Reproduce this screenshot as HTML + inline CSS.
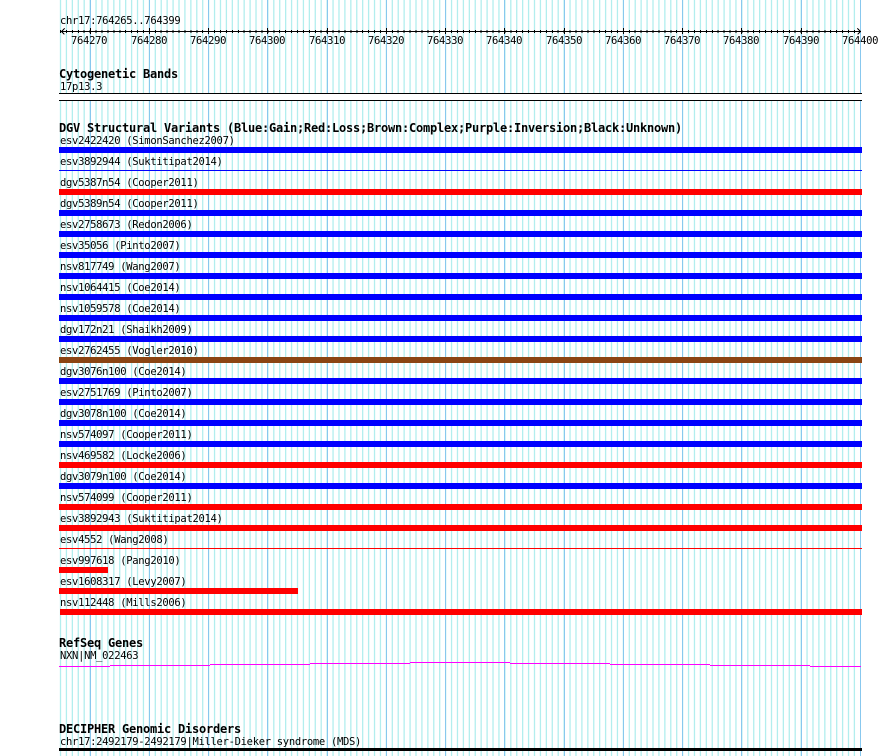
<!DOCTYPE html>
<html>
<head>
<meta charset="utf-8">
<style>
html,body{margin:0;padding:0;background:#fff;width:890px;height:756px;overflow:hidden}
svg{display:block;position:absolute;left:0;top:0}
text{font-family:"DejaVu Sans Mono","Liberation Mono",monospace;font-size:10.5px;letter-spacing:-.3px;fill:#000}
text.t{font-weight:bold;font-size:12px;letter-spacing:-.225px}
.c{shape-rendering:crispEdges}
</style>
</head>
<body>
<svg width="890" height="756" viewBox="0 0 890 756" xmlns="http://www.w3.org/2000/svg">
<defs>
<path id="g" d="M60.5 0v756m5.925-756v756m5.925-756v756m5.925-756v756m5.925-756v756m5.925-756v756m5.925-756v756m5.925-756v756m5.925-756v756m5.925-756v756"/>
<path id="k" d="M60.5 30v3m5.925-3v3m5.925-3v3m5.925-3v3m5.925-3v3m5.925-3v3m5.925-3v3m5.925-3v3m5.925-3v3m5.925-3v3"/>
</defs>
<g stroke="#b2eeee" stroke-width="1.3" fill="none">
<use href="#g"/><use href="#g" x="59.25"/><use href="#g" x="118.5"/><use href="#g" x="177.75"/><use href="#g" x="237"/><use href="#g" x="296.25"/><use href="#g" x="355.5"/><use href="#g" x="414.75"/><use href="#g" x="474"/><use href="#g" x="533.25"/><use href="#g" x="592.5"/><use href="#g" x="651.75"/><use href="#g" x="711"/>
<path d="M830.75 0v756M836.7 0v756M842.6 0v756M848.5 0v756M854.4 0v756"/>
</g>
<path class="c" stroke="#88c8ee" stroke-width="1" fill="none" d="M90.5 0v756M149.5 0v756M208.5 0v756M267.5 0v756M327.5 0v756M386.5 0v756M445.5 0v756M504.5 0v756M564.5 0v756M623.5 0v756M682.5 0v756M741.5 0v756M801.5 0v756M860.5 0v756"/>

<rect x="59" y="94" width="803" height="6" fill="#fff"/>
<rect class="c" x="59" y="93" width="803" height="1" fill="#000"/>
<rect class="c" x="59" y="100" width="803" height="1" fill="#000"/>

<text x="60" y="24">chr17:764265..764399</text>
<g class="c" stroke="#000" stroke-width="1" fill="none">
<path d="M61 31.5H861M64.5 28.5l-3 3 3 3M857.5 28.5l3 3-3 3"/>
<use href="#k"/><use href="#k" x="59.25"/><use href="#k" x="118.5"/><use href="#k" x="177.75"/><use href="#k" x="237"/><use href="#k" x="296.25"/><use href="#k" x="355.5"/><use href="#k" x="414.75"/><use href="#k" x="474"/><use href="#k" x="533.25"/><use href="#k" x="592.5"/><use href="#k" x="651.75"/><use href="#k" x="711"/>
<path d="M830.5 30v3M836.5 30v3M842.5 30v3M848.5 30v3M854.5 30v3"/>
<path d="M90.5 28v6M149.5 28v6M208.5 28v6M267.5 28v6M327.5 28v6M386.5 28v6M445.5 28v6M504.5 28v6M564.5 28v6M623.5 28v6M682.5 28v6M741.5 28v6M801.5 28v6"/>
</g>
<text x="71" y="44">764270</text>
<text x="131" y="44">764280</text>
<text x="190" y="44">764290</text>
<text x="249" y="44">764300</text>
<text x="309" y="44">764310</text>
<text x="368" y="44">764320</text>
<text x="427" y="44">764330</text>
<text x="486" y="44">764340</text>
<text x="546" y="44">764350</text>
<text x="605" y="44">764360</text>
<text x="664" y="44">764370</text>
<text x="723" y="44">764380</text>
<text x="783" y="44">764390</text>
<text x="842" y="44">764400</text>

<text class="t" x="59" y="78">Cytogenetic Bands</text>
<text x="60" y="90">17p13.3</text>

<text class="t" x="59" y="132">DGV Structural Variants (Blue:Gain;Red:Loss;Brown:Complex;Purple:Inversion;Black:Unknown)</text>

<g class="c">
<rect x="59" y="147" width="803" height="6" fill="#0000ff"/>
<rect x="59" y="170" width="803" height="1" fill="#0000ff"/>
<rect x="59" y="189" width="803" height="6" fill="#ff0000"/>
<rect x="59" y="210" width="803" height="6" fill="#0000ff"/>
<rect x="59" y="231" width="803" height="6" fill="#0000ff"/>
<rect x="59" y="252" width="803" height="6" fill="#0000ff"/>
<rect x="59" y="273" width="803" height="6" fill="#0000ff"/>
<rect x="59" y="294" width="803" height="6" fill="#0000ff"/>
<rect x="59" y="315" width="803" height="6" fill="#0000ff"/>
<rect x="59" y="336" width="803" height="6" fill="#0000ff"/>
<rect x="59" y="357" width="803" height="6" fill="#8b4513"/>
<rect x="59" y="378" width="803" height="6" fill="#0000ff"/>
<rect x="59" y="399" width="803" height="6" fill="#0000ff"/>
<rect x="59" y="420" width="803" height="6" fill="#0000ff"/>
<rect x="59" y="441" width="803" height="6" fill="#0000ff"/>
<rect x="59" y="462" width="803" height="6" fill="#ff0000"/>
<rect x="59" y="483" width="803" height="6" fill="#0000ff"/>
<rect x="59" y="504" width="803" height="6" fill="#ff0000"/>
<rect x="59" y="525" width="803" height="6" fill="#ff0000"/>
<rect x="59" y="548" width="803" height="1" fill="#ff0000"/>
<rect x="59" y="567" width="49" height="6" fill="#ff0000"/>
<rect x="59" y="588" width="239" height="6" fill="#ff0000"/>
<rect x="60" y="609" width="802" height="6" fill="#ff0000"/>
</g>

<text x="60" y="144">esv2422420 (SimonSanchez2007)</text>
<text x="60" y="165">esv3892944 (Suktitipat2014)</text>
<text x="60" y="186">dgv5387n54 (Cooper2011)</text>
<text x="60" y="207">dgv5389n54 (Cooper2011)</text>
<text x="60" y="228">esv2758673 (Redon2006)</text>
<text x="60" y="249">esv35056 (Pinto2007)</text>
<text x="60" y="270">nsv817749 (Wang2007)</text>
<text x="60" y="291">nsv1064415 (Coe2014)</text>
<text x="60" y="312">nsv1059578 (Coe2014)</text>
<text x="60" y="333">dgv172n21 (Shaikh2009)</text>
<text x="60" y="354">esv2762455 (Vogler2010)</text>
<text x="60" y="375">dgv3076n100 (Coe2014)</text>
<text x="60" y="396">esv2751769 (Pinto2007)</text>
<text x="60" y="417">dgv3078n100 (Coe2014)</text>
<text x="60" y="438">nsv574097 (Cooper2011)</text>
<text x="60" y="459">nsv469582 (Locke2006)</text>
<text x="60" y="480">dgv3079n100 (Coe2014)</text>
<text x="60" y="501">nsv574099 (Cooper2011)</text>
<text x="60" y="522">esv3892943 (Suktitipat2014)</text>
<text x="60" y="543">esv4552 (Wang2008)</text>
<text x="60" y="564">esv997618 (Pang2010)</text>
<text x="60" y="585">esv1608317 (Levy2007)</text>
<text x="60" y="606">nsv112448 (Mills2006)</text>

<text class="t" x="59" y="647">RefSeq Genes</text>
<text x="60" y="659">NXN|NM_022463</text>
<g class="c" fill="#ff00ff">
<rect x="59" y="666" width="51" height="1"/>
<rect x="110" y="665" width="100" height="1"/>
<rect x="210" y="664" width="100" height="1"/>
<rect x="310" y="663" width="100" height="1"/>
<rect x="410" y="662" width="100" height="1"/>
<rect x="510" y="663" width="100" height="1"/>
<rect x="610" y="664" width="100" height="1"/>
<rect x="710" y="665" width="100" height="1"/>
<rect x="810" y="666" width="51" height="1"/>
</g>

<text class="t" x="59" y="733">DECIPHER Genomic Disorders</text>
<text x="60" y="745">chr17:2492179-2492179|Miller-Dieker syndrome (MDS)</text>
<rect class="c" x="59" y="748" width="803" height="3" fill="#000"/>
</svg>
</body>
</html>
